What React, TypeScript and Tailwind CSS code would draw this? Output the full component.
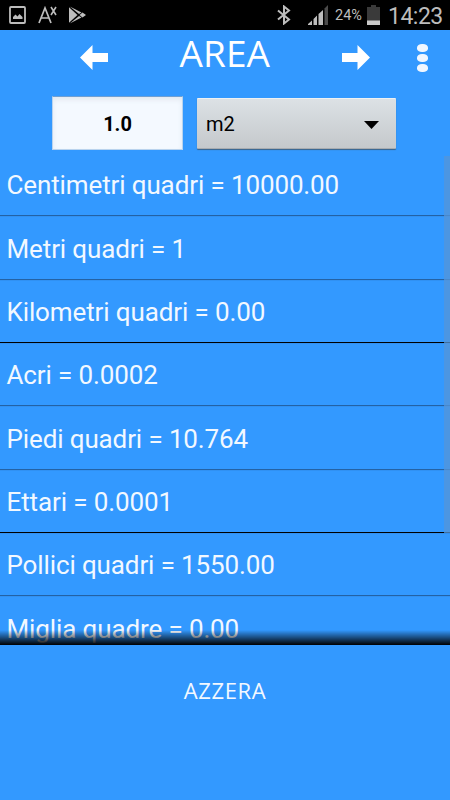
import React from 'react';

const conversions = [
  { label: 'Centimetri quadri', value: '10000.00', line: 'bg-[#2462a4]' },
  { label: 'Metri quadri', value: '1', line: 'bg-[#2462a4]' },
  { label: 'Kilometri quadri', value: '0.00', line: 'bg-black' },
  { label: 'Acri', value: '0.0002', line: 'bg-[#2462a4]' },
  { label: 'Piedi quadri', value: '10.764', line: 'bg-[#2462a4]' },
  { label: 'Ettari', value: '0.0001', line: 'bg-black' },
  { label: 'Pollici quadri', value: '1550.00', line: 'bg-[#2462a4]' },
  { label: 'Miglia quadre', value: '0.00', line: 'bg-[#2462a4]' },
];

const StatusBar = () => (
  <div className="flex h-[30px] items-center bg-black text-[#bdbdbd]">
    <svg className="ml-[9px] h-[18px] w-[17px] shrink-0" viewBox="0 0 17 18">
      <rect x="1" y="1" width="15" height="16" rx="1" fill="none" stroke="currentColor" strokeWidth="1.8" />
      <path d="M4 13v-2l2.500-2.500 2 2 2-2.500 3 3v2z" fill="currentColor" />
    </svg>
    <svg className="ml-3 h-[18px] w-[19px] shrink-0" viewBox="0 0 19 18" fill="none" stroke="currentColor" strokeWidth="1.7">
      <path d="M1 17 7 2l6 15M3 12h8" />
      <path d="m13 1 5 8M18 1l-5 8" strokeWidth="1.600" />
    </svg>
    <svg className="ml-3 h-[18px] w-[18px] shrink-0" viewBox="0 0 18 18" fill="currentColor">
      <path d="M.8 .5 12.500 6.500 10 8z" />
      <path d="M0 1.200 8.500 9 0 16.800z" />
      <path d="M.8 17.500 10 10l2.500 1.500z" />
      <path d="m10.500 9 3-2.500L17 9l-3.500 2.500z" />
    </svg>
    <svg className="ml-[190px] h-5 w-[14px] shrink-0" viewBox="0 0 14 20" fill="none" stroke="currentColor" strokeWidth="2">
      <path d="m1 5.500 11 9-5 4V1.500l5 4-11 9" />
    </svg>
    <svg className="ml-[17px] h-5 w-5 shrink-0" viewBox="0 0 20 20" fill="currentColor">
      <path d="M0 20v-1l4-3.500V20zM5.500 20v-6L9 10.500V20zM10.500 20V9L15 5v15z" />
      <path d="M16.500 20V3.500L20 0v20z" fill="#4b4b4b" />
    </svg>
    <span className="ml-[7px] mt-[3px] w-[28px] shrink-0 whitespace-nowrap text-[14.500px] leading-none">24%</span>
    <svg className="ml-[4px] h-5 w-[13px] shrink-0" viewBox="0 0 13 20">
      <path d="M4 0h5v2h4v18H0V2h4z" fill="#3a3a3a" />
      <path d="M0 15.500h13V20H0z" fill="#cacaca" />
    </svg>
    <span className="ml-[8px] mt-[3px] whitespace-nowrap text-[23px] leading-none tracking-[-0.5px]">14:23</span>
  </div>
);

const Header = () => (
  <header className="flex h-[66px] pt-[15px] text-white">
    <svg className="ml-20 h-[26px] w-7" viewBox="0 0 28 26" fill="currentColor">
      <path d="M0 12.500 12.500 0v8H28v9H12.500v8z" />
    </svg>
    <h1 className="-mt-[11px] ml-[71.500px] w-[90.500px] whitespace-nowrap font-['Open_Sans',sans-serif] text-[37px] leading-[38px] tracking-[0.1px]">
      AREA
    </h1>
    <svg className="ml-[72px] h-[26px] w-7" viewBox="0 0 28 26" fill="currentColor">
      <path d="M28 12.500 15.500 0v8H0v9h15.500v8z" />
    </svg>
    <div className="ml-[47px] -mt-[1px] flex flex-col gap-[2px]">
      <span className="h-2 w-[11px] rounded-[45%] bg-[#f1f7ff]" />
      <span className="h-2 w-[11px] rounded-[45%] bg-[#f1f7ff]" />
      <span className="h-2 w-[11px] rounded-[45%] bg-[#f1f7ff]" />
    </div>
  </header>
);

const Converter = () => (
  <div className="flex h-[60px]">
    <div className="ml-[52px] h-[54px] w-[131px] border border-[#b9d3ee] border-t-[#6fa0d3] bg-[#f4f9ff] text-center text-[20px] font-bold leading-[54px] text-black shadow-[inset_0_3px_5px_#e4eaf1]">
      1.0
    </div>
    <div className="ml-[14px] mt-[2px] flex h-[51px] w-[199px] items-center justify-between rounded-[1px] border-t border-b border-t-[#eef1f3] border-b-[#a8acb0] bg-linear-to-b from-[#dce1e5] to-[#c5c9cc] pr-[17px] pl-[9px] text-black shadow-[0_1px_1px_#3c6489]">
      <span className="text-[20px]">m2</span>
      <svg className="mt-[3px] h-2 w-[15px]" viewBox="0 0 15 8">
        <path d="M0 0h15L7.500 8z" />
      </svg>
    </div>
  </div>
);

const App = () => {
  return (
    <div className="h-[800px] w-[450px] overflow-hidden bg-[#3399ff] font-[Roboto,sans-serif]">
      <StatusBar />
      <Header />
      <Converter />
      <div className="relative h-[489px] overflow-hidden">
        <ul className="-mt-[3px]">
          {conversions.map((item) => (
            <li key={item.label} className="flex h-[63.330px] flex-col justify-end">
              <span className="pl-[6.500px] text-[26px] leading-[59px] tracking-[-0.120px] whitespace-nowrap text-[#f2f8ff]">
                {item.label} = {item.value}
              </span>
              <div className={`h-px shrink-0 shadow-[0_1px_0_#3191f2] ${item.line}`} />
            </li>
          ))}
        </ul>
        <div className="absolute top-0 right-0 h-[377px] w-[6px] bg-[#5595d8]/75" />
        <div className="absolute bottom-0 left-0 h-[15px] w-full bg-linear-to-b from-transparent to-black" />
      </div>
      <button className="mt-[31px] block w-full text-center font-['Open_Sans',sans-serif] text-[22px] leading-7 tracking-[0.600px] text-[#f2f8ff]">
        AZZERA
      </button>
    </div>
  );
};

export default App;
